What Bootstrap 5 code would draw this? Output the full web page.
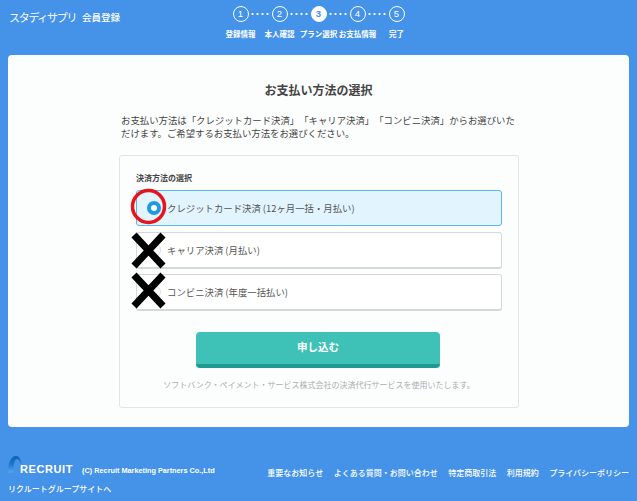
<!DOCTYPE html>
<html lang="ja"><head><meta charset="utf-8"><title>お支払い方法の選択</title>
<link href="https://cdn.jsdelivr.net/npm/bootstrap@5.3.0/dist/css/bootstrap.min.css" rel="stylesheet">
<style>
html,body{height:501px;overflow:hidden}
body{background:#4593e8;font-family:"Noto Sans CJK JP","Noto Sans",sans-serif;color:#555;width:637px;position:relative}
.top-bar{height:55px;color:#fff;padding:0 0 0 9px}
.brand-name{font-size:11px;line-height:16px;margin-top:9px;width:73px;white-space:nowrap;letter-spacing:-1.3px}
.brand-sub{font-size:9.5px;line-height:16px;margin:9px 0 0 0;width:130px;font-weight:500}
.stepper{width:195px;margin-left:9px;padding-top:6px}
.step-col{width:39px;flex:none;text-align:center;position:relative;white-space:nowrap}
.step-ring{width:16px;height:16px;border:1px solid #fff;border-radius:50%;font-size:9.5px;line-height:14px;margin:0 auto;font-family:"Liberation Sans",sans-serif}
.step-ring.on{background:#fff;color:#4593e8;font-weight:700}
.step-label{font-size:7.5px;line-height:12px;margin-top:6px;margin-left:-10px;margin-right:-10px;font-weight:700}
.step-dots{position:absolute;left:29px;top:7px;width:20px;height:2px;background:radial-gradient(circle,#fff 1px,transparent 1.2px) 0 0/5px 2px}
.main-panel{margin:0 8px;height:372px;background:#fcfdfd;border-radius:4px;padding-top:26px}
.panel-title{font-size:12px;line-height:18px;font-weight:700;text-align:center;color:#444;margin:0 0 15px}
.panel-lead{font-size:9.4px;line-height:13px;margin:0 0 15px 113px;color:#444;white-space:nowrap}
.kagi-gap{display:inline-block;width:0}
.pay-box{margin:0 0 0 111px;width:400px;height:253px;border:1px solid #e2e5e8;border-radius:3px;background:#fcfdfd;padding:16px 16px 0}
.pay-legend{font-size:8px;line-height:12px;font-weight:700;color:#444;margin-bottom:6px}
.pay-opt{height:37px;border:1px solid #d5d8db;border-bottom-width:2px;border-radius:3px;background:#fff;margin-bottom:5px;padding-left:30px;font-size:9.4px;line-height:34px;color:#555}
.pay-opt.sel{background:#e2f4fe;border-color:#5ab5ea;border-width:1px;height:36px;margin-bottom:6px}
.pay-radio{position:absolute;left:147px;width:14px;height:14px;border-radius:50%;border:1px solid #dcdfe2;background:#fff}
.pay-radio.checked{border:4px solid #1d9ae0}
.btn-apply{display:block;width:244px;height:36px;margin:21px 0 0 60px;background:#3ec1b7;border:0;border-bottom:4px solid #1f9a90;border-radius:4px;color:#fff;font-size:10.5px;font-weight:700;line-height:16px;padding:0 0 2px;text-align:center}
.pay-note{font-size:8px;line-height:12px;text-align:center;color:#a9adb1;margin-top:11px;white-space:nowrap}
.foot{color:#fff;padding:35px 8px 0 8px}
.corp-name{font-family:"Liberation Sans",sans-serif;font-size:11px;font-weight:700;letter-spacing:.6px;line-height:14px;margin-left:12px}
.corp-copy{font-family:"Liberation Sans",sans-serif;font-size:7.3px;font-weight:700;margin-left:9px}
.corp-site{font-size:8px;line-height:12px;font-weight:500;margin-top:6px}
.foot-links{font-size:8px;font-weight:500;line-height:12px;gap:10.5px;margin-top:5px;white-space:nowrap}
.logo-arc{position:absolute;left:8px;top:456px}
.mark-layer{position:absolute;left:0;top:0}
</style></head><body>
<header class="top-bar d-flex">
<div class="brand-name">スタディサプリ</div>
<div class="brand-sub">会員登録</div>
<div class="stepper d-flex">
<div class="step-col"><div class="step-ring">1</div><div class="step-dots"></div><div class="step-label">登録情報</div></div>
<div class="step-col"><div class="step-ring">2</div><div class="step-dots"></div><div class="step-label">本人確認</div></div>
<div class="step-col"><div class="step-ring on">3</div><div class="step-dots"></div><div class="step-label">プラン選択</div></div>
<div class="step-col"><div class="step-ring">4</div><div class="step-dots"></div><div class="step-label">お支払情報</div></div>
<div class="step-col"><div class="step-ring">5</div><div class="step-label">完了</div></div>
</div>
</header>
<main class="main-panel">
<h1 class="panel-title">お支払い方法の選択</h1>
<p class="panel-lead">お支払い方法は「クレジットカード決済」<span class="kagi-gap"></span>「キャリア決済」<span class="kagi-gap"></span>「コンビニ決済」からお選びいた<br>だけます。ご希望するお支払い方法をお選びください。</p>
<section class="pay-box">
<div class="pay-legend">決済方法の選択</div>
<div class="pay-opt sel">クレジットカード決済 (12ヶ月一括・月払い)</div>
<div class="pay-opt">キャリア決済 (月払い)</div>
<div class="pay-opt">コンビニ決済 (年度一括払い)</div>
<button class="btn-apply" type="button">申し込む</button>
<div class="pay-note">ソフトバンク・ペイメント・サービス株式会社の決済代行サービスを使用いたします。</div>
</section>
</main>
<footer class="foot d-flex justify-content-between">
<div>
<div class="d-flex align-items-baseline"><span class="corp-name">RECRUIT</span><span class="corp-copy">(C) Recruit Marketing Partners Co.,Ltd</span></div>
<div class="corp-site">リクルートグループサイトへ</div>
</div>
<div class="foot-links d-flex"><span>重要なお知らせ</span><span>よくある質問・お問い合わせ</span><span>特定商取引法</span><span>利用規約</span><span>プライバシーポリシー</span></div>
</footer>
<svg class="logo-arc" width="16" height="17" viewBox="0 0 16 17"><defs><linearGradient id="arcfade" x1="0" y1="1" x2="0" y2="0"><stop offset="0" stop-color="#5aa5ea"/><stop offset=".5" stop-color="#1a78d0"/><stop offset="1" stop-color="#0f5fb4"/></linearGradient></defs><path d="M0 16.500C0 7 3 0 8 0c3 0 5 3 5.500 9C12 5 10.500 3 9 3 6.500 3 5.500 8 5.500 16.500Z" fill="url(#arcfade)"/></svg>
<div class="pay-radio checked" style="top:201px"></div>
<div class="pay-radio" style="top:243px"></div>
<div class="pay-radio" style="top:285px"></div>
<svg class="mark-layer" width="637" height="501" viewBox="0 0 637 501">
<circle cx="148.500" cy="206.500" r="16" fill="none" stroke="#e8141c" stroke-width="3.500"/>
<path d="M134 235l29 31M163 235l-29 31M134 275l29 31M163 275l-29 31" stroke="#000" stroke-width="7" fill="none"/>
</svg>
<script src="https://cdn.jsdelivr.net/npm/bootstrap@5.3.0/dist/js/bootstrap.bundle.min.js"></script>
</body></html>
